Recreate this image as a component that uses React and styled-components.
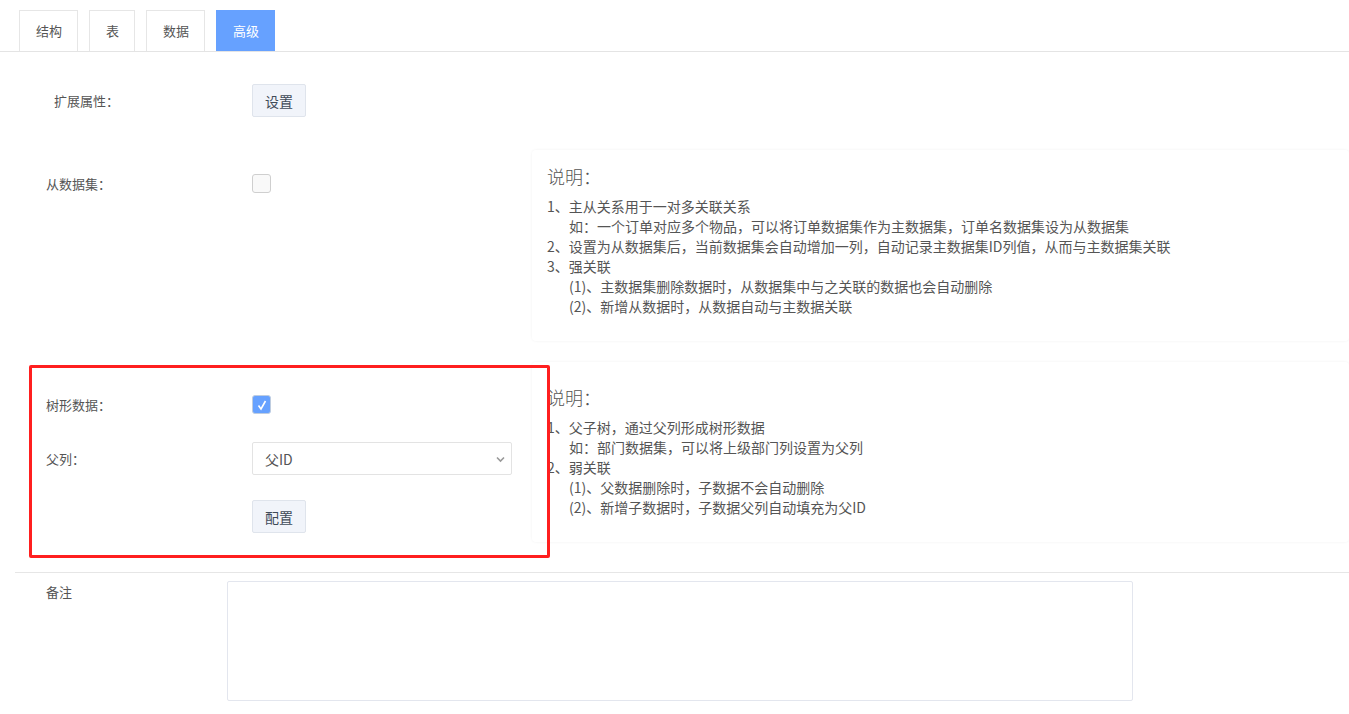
import React, { useState } from 'react';
import styled, { createGlobalStyle } from 'styled-components';

const GlobalStyle = createGlobalStyle`
  body {
    margin: 0;
    background: #fff;
    color: #555;
    font-family: "Microsoft YaHei", "Noto Sans CJK SC", "Liberation Sans", sans-serif;
  }
  * { box-sizing: border-box; }
`

const Page = styled.div`
  width: 1349px;
  min-height: 714px;
`

// 탭
const TabBar = styled.div`
  display: flex;
  gap: 11px;
  padding: 10px 0 0 19px;
  border-bottom: 1px solid #e4e4e4;
`

const Tab = styled.div`
  height: 41px;
  line-height: 40px;
  padding: 0 15px 0 16px;
  font-size: 13px;
  border: 1px solid ${p => (p.$active ? '#66a1ff' : '#e6e6e6')};
  border-bottom: none;
  background: ${p => (p.$active ? '#66a1ff' : '#fff')};
  color: ${p => (p.$active ? '#fff' : '#555')};
  cursor: pointer;
`

const Section = styled.div`
  position: relative;
  display: flex;
  height: ${p => p.$height}px;
  margin-top: ${p => p.$top || 0}px;
`

const LeftCol = styled.div`
  width: 532px;
  flex-shrink: 0;
  padding-top: ${p => p.$pad}px;
`

const Row = styled.div`
  display: flex;
  align-items: center;
  height: ${p => p.$h || 33}px;
  margin-top: ${p => p.$mt || 0}px;
`

const Label = styled.div`
  width: 252px;
  padding-left: ${p => p.$indent || 46}px;
  font-size: 13px;
  color: #555;
`

const Button = styled.button`
  width: 54px;
  height: 33px;
  border: 1px solid #dfe4ec;
  border-radius: 2px;
  background: #f1f4fa;
  color: #3f4b58;
  font-size: 14px;
  font-family: inherit;
  padding: 0;
  cursor: pointer;
`

const Box = styled.div`
  width: 19px;
  height: 19px;
  border: 1px solid ${p => (p.$checked ? '#bfcde0' : '#cfcfcf')};
  border-radius: 3px;
  background: ${p => (p.$checked ? '#66a1ff' : '#f9f9f9')};
  display: flex;
  align-items: center;
  justify-content: center;
  cursor: pointer;
`

const CheckBox = ({ initial }) => {
  const [checked, setChecked] = useState(initial)
  return (
    <Box $checked={checked} onClick={() => setChecked(!checked)}>
      {checked && (
        <svg width="12" height="12" viewBox="0 0 12 12">
          <polyline points="2.5,6.5 5,10 9.5,2" fill="none" stroke="#fff" strokeWidth="1.6" />
        </svg>
      )}
    </Box>
  )
}

const SelectWrap = styled.div`
  position: relative;
  width: 260px;
  height: 33px;
  border: 1px solid #e3e3e3;
  border-radius: 2px;
  display: flex;
  align-items: center;
  padding-left: 12px;
  font-size: 14px;
  color: #555;

  > svg {
    position: absolute;
    right: 6px;
    top: 13px;
  }
`

const Panel = styled.div`
  flex: 1;
  border-radius: 4px;
  box-shadow: 0 0 3px rgba(0, 0, 0, 0.06);
  padding: ${p => p.$pad}px 15px 0 15px;
`

const PanelTitle = styled.div`
  font-size: 18px;
  line-height: 24px;
  font-weight: 300;
  color: #555;
`

const List = styled.div`
  margin-top: 8px;
  font-size: 14px;
  line-height: 20px;
  color: #555;
`

const Item = styled.div`
  padding-left: ${p => (p.$sub ? 22 : 0)}px;
  white-space: nowrap;
`

const Highlight = styled.div`
  position: absolute;
  top: 3px;
  left: 29px;
  width: 521px;
  height: 193px;
  border: 3px solid #ff1f1f;
  border-radius: 2px;
  pointer-events: none;
`

const Divider = styled.div`
  margin: 30px 0 0 15px;
  border-top: 1px solid #e6e6e6;
`

const NoteRow = styled.div`
  display: flex;
  padding-top: 8px;
`

const NoteLabel = styled.div`
  width: 227px;
  padding-left: 46px;
  font-size: 13px;
  line-height: 22px;
  color: #555;
`

const NoteArea = styled.textarea`
  width: 906px;
  height: 120px;
  border: 1px solid #e3e6ee;
  border-radius: 2px;
  resize: none;
  outline: none;
  font-family: inherit;
`

const tabs = ['结构', '表', '数据', '高级']

const note1 = [
  { t: '1、主从关系用于一对多关联关系' },
  { t: '如：一个订单对应多个物品，可以将订单数据集作为主数据集，订单名数据集设为从数据集', sub: true },
  { t: '2、设置为从数据集后，当前数据集会自动增加一列，自动记录主数据集ID列值，从而与主数据集关联' },
  { t: '3、强关联' },
  { t: '(1)、主数据集删除数据时，从数据集中与之关联的数据也会自动删除', sub: true },
  { t: '(2)、新增从数据时，从数据自动与主数据关联', sub: true },
]

const note2 = [
  { t: '1、父子树，通过父列形成树形数据' },
  { t: '如：部门数据集，可以将上级部门列设置为父列', sub: true },
  { t: '2、弱关联' },
  { t: '(1)、父数据删除时，子数据不会自动删除', sub: true },
  { t: '(2)、新增子数据时，子数据父列自动填充为父ID', sub: true },
]

function App() {
  const [current, setCurrent] = useState(3)

  return (
    <Page>
      <GlobalStyle />
      <TabBar>
        {tabs.map((name, i) => (
          <Tab key={name} $active={i === current} onClick={() => setCurrent(i)}>{name}</Tab>
        ))}
      </TabBar>

      {/* 확장 속성 */}
      <Section $height={98}>
        <LeftCol $pad={32}>
          <Row>
            <Label $indent={54}>扩展属性：</Label>
            <Button>设置</Button>
          </Row>
        </LeftCol>
      </Section>

      {/* 从数据集 */}
      <Section $height={191}>
        <LeftCol $pad={24}>
          <Row $h={19}>
            <Label>从数据集：</Label>
            <CheckBox initial={false} />
          </Row>
        </LeftCol>
        <Panel $pad={14}>
          <PanelTitle>说明：</PanelTitle>
          <List>
            {note1.map((n, i) => <Item key={i} $sub={n.sub}>{n.t}</Item>)}
          </List>
        </Panel>
      </Section>

      {/* 树形数据 */}
      <Section $height={180} $top={21}>
        <LeftCol $pad={26}>
          <Row>
            <Label>树形数据：</Label>
            <CheckBox initial={true} />
          </Row>
          <Row $mt={21}>
            <Label>父列：</Label>
            <SelectWrap>
              父ID
              <svg width="9" height="7" viewBox="0 0 9 7">
                <polyline points="1,1.5 4.5,5 8,1.5" fill="none" stroke="#999" strokeWidth="1.6" />
              </svg>
            </SelectWrap>
          </Row>
          <Row $mt={25}>
            <Label />
            <Button>配置</Button>
          </Row>
        </LeftCol>
        <Panel $pad={23}>
          <PanelTitle>说明：</PanelTitle>
          <List>
            {note2.map((n, i) => <Item key={i} $sub={n.sub}>{n.t}</Item>)}
          </List>
        </Panel>
        <Highlight />
      </Section>

      <Divider />
      <NoteRow>
        <NoteLabel>备注</NoteLabel>
        <NoteArea />
      </NoteRow>
    </Page>
  )
}

export default App
